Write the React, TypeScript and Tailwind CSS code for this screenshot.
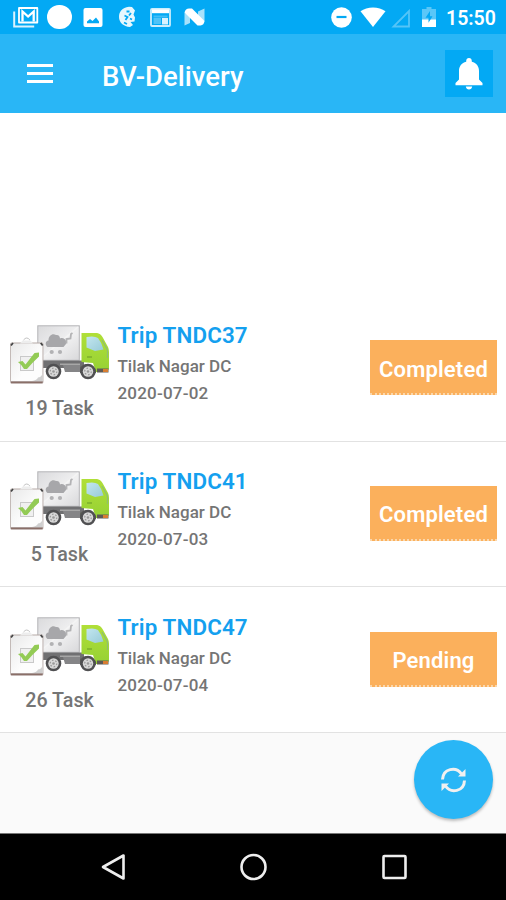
type Trip = {
    name: string;
    depot: string;
    date: string;
    tasks: number;
    status: string;
};

const trips: Trip[] = [
    { name: 'Trip TNDC37', depot: 'Tilak Nagar DC', date: '2020-07-02', tasks: 19, status: 'Completed' },
    { name: 'Trip TNDC41', depot: 'Tilak Nagar DC', date: '2020-07-03', tasks: 5, status: 'Completed' },
    { name: 'Trip TNDC47', depot: 'Tilak Nagar DC', date: '2020-07-04', tasks: 26, status: 'Pending' },
];

function StatusBar() {
    return (
        <div className="flex h-[34px] items-center bg-[#03a9f4] pl-[13px] pr-[10px] text-white">
            {/* mail */}
            <svg className="h-[22px] w-[26px]" viewBox="0 0 26 22" fill="none" stroke="currentColor">
                <path d="M1.2 5.5v14.9h20" strokeWidth="2" strokeOpacity=".85" />
                <path d="M6 2h18.300v14.500H6z" strokeWidth="1.800" strokeLinejoin="round" />
                <path d="M9.500 15.500V5.500l5.600 5 5.600-5v10" strokeWidth="2.300" />
            </svg>
            <div className="ml-2 h-6 w-[25px] rounded-full bg-white" />
            {/* gallery */}
            <svg className="ml-[11px] h-[19px] w-5" viewBox="0 0 20 19">
                <rect x=".5" width="19" height="19" rx="2" fill="currentColor" />
                <path d="M4 15.200v-1.700l3-2.500 2.500 2 3.500-3.500 3 4v1.700z" fill="#03a9f4" />
            </svg>
            {/* profile */}
            <svg className="ml-[15px] h-[22px] w-[18px]" viewBox="0 0 18 22">
                <path d="M11 .8C4 1.500 1 6 1 11c0 5.500 4.500 9.500 11 10l3-2-2.500-3 4-.500.500-4-1.500-3 1.500-4-3-3.500z" fill="currentColor" fillOpacity=".9" />
                <path d="M8.500 5.500h3M13 7l-2 2.500M6.500 9.500l3 1.500-2 3M12 12.500l2 1M6 16.500l3 1.500" fill="none" stroke="#03a9f4" strokeWidth="1.800" />
            </svg>
            {/* news */}
            <svg className="ml-[14px] h-[19px] w-[21px]" viewBox="0 0 21 19">
                <rect x="1" y="1" width="19" height="17" rx="1" fill="none" stroke="currentColor" strokeWidth="1.8" strokeOpacity=".8" />
                <path d="M2 1.500h17v3.700H2z" fill="currentColor" />
                <path d="M3.500 7.500h14v2h-14z" fill="currentColor" fillOpacity=".25" />
                <path d="M3.500 10h7.500v6H3.500z" fill="currentColor" fillOpacity=".3" />
                <path d="M12 10h6v6.500h-6z" fill="currentColor" fillOpacity=".85" />
            </svg>
            {/* N */}
            <svg className="ml-[13px] h-[18px] w-[21px]" viewBox="0 0 21 18">
                <path d="M.500 4.500 6 8v7l-5.500 2.500zM20.500.500v13L14 9V3.500z" fill="currentColor" fillOpacity=".65" />
                <path d="M.500 4.500Q1.500.500 5 .500h3L20.500 13q-.500 4-4 4.500h-3z" fill="currentColor" />
            </svg>
            {/* do not disturb */}
            <svg className="ml-auto h-[21px] w-[21px]" viewBox="0 0 21 21">
                <circle cx="10.5" cy="10.5" r="10.3" fill="currentColor" />
                <path d="M5.5 10h10" stroke="#03a9f4" strokeWidth="2.2" />
            </svg>
            {/* wifi */}
            <svg className="ml-2 h-5 w-[26px]" viewBox="0 0 26 20">
                <path d="M13 20 .5 4.3C7-.8 19-.8 25.500 4.300z" fill="currentColor" />
            </svg>
            {/* signal */}
            <svg className="ml-[5px] mt-0.5 h-[19px] w-5" viewBox="0 0 20 19">
                <path d="M2.500 17.500H18V2z" fill="none" stroke="currentColor" strokeWidth="1.800" strokeOpacity=".32" />
            </svg>
            {/* battery */}
            <svg className="ml-[11px] h-5 w-[14px]" viewBox="0 0 14 20">
                <path d="M4.500 0h5v2H14v11H0V2h4.500z" fill="currentColor" fillOpacity=".35" />
                <path d="M0 12.500h14V20H0z" fill="currentColor" />
                <path d="M8 4 3.500 10.800h3v5l4-6.500H8z" fill="#03a9f4" />
            </svg>
            <span className="ml-[10px] mt-[3px] w-[50px] whitespace-nowrap text-[19.500px] font-semibold leading-none">
                15:50
            </span>
        </div>
    );
}

function AppBar() {
    return (
        <div className="flex h-[78.500px] items-center bg-[#29b6f6] pl-[27px] pr-[13px] text-white">
            <div className="flex w-[26px] flex-col gap-[5px]">
                <div className="h-[3px] bg-white" />
                <div className="h-[3px] bg-white" />
                <div className="h-[3px] bg-white" />
            </div>
            <h1 className="ml-[49px] mt-[7px] text-[27.500px] font-medium leading-none">BV-Delivery</h1>
            <button type="button" className="ml-auto flex h-[47px] w-12 items-center justify-center bg-[#03a9f4]">
                <svg className="mr-px mt-0.5 h-8 w-7" viewBox="0 0 28 32" fill="currentColor">
                    <path d="M14 0c-1.700 0-2.800 1.200-2.800 3v.800C6.500 5 4 8.500 4 13v8.500L.500 25v2.300h27V25L24 21.500V13c0-4.500-2.500-8-7.200-9.200V3c0-1.800-1.100-3-2.800-3zM10.800 28.500c.300 1.800 1.500 3 3.200 3s2.900-1.200 3.200-3z" />
                </svg>
            </button>
        </div>
    );
}

function Wheel({ cx }: { cx: number }) {
    return (
        <g>
            <circle cx={cx} cy="46.500" r="7.800" fill="#505052" />
            <circle cx={cx} cy="46.500" r="5.200" fill="#d8d8d8" />
            <circle cx={cx} cy="46.500" r="3.300" fill="none" stroke="#999" strokeWidth="1.200" strokeDasharray="1.600 1.800" />
            <circle cx={cx} cy="46.500" r="1.300" fill="#999" />
        </g>
    );
}

function TruckPicture() {
    return (
        <svg className="h-[60px] w-[100px]" viewBox="0 0 100 60">
            <defs>
                <linearGradient id="box" x1="0" y1="0" x2="1" y2="1">
                    <stop offset="0" stopColor="#dadadc" />
                    <stop offset=".55" stopColor="#f0f0f1" />
                    <stop offset="1" stopColor="#d8d8da" />
                </linearGradient>
                <linearGradient id="cab" x1="0" y1="0" x2="0" y2="1">
                    <stop offset="0" stopColor="#b0df38" />
                    <stop offset="1" stopColor="#96d134" />
                </linearGradient>
                <linearGradient id="glass" x1="0" y1="0" x2="1" y2="1">
                    <stop offset="0" stopColor="#c3e6ef" />
                    <stop offset="1" stopColor="#98cbd8" />
                </linearGradient>
                <linearGradient id="paper" x1="0" y1="0" x2="1" y2="1">
                    <stop offset="0" stopColor="#e9e9e9" />
                    <stop offset=".6" stopColor="#fdfdfd" />
                </linearGradient>
            </defs>
            {/* cargo box with the cart mark */}
            <rect x="27.800" y=".800" width="41.500" height="34.500" fill="url(#box)" stroke="#b4b4b7" />
            <path d="M28 36 68 2" stroke="#f7f7f7" strokeWidth="1.500" strokeOpacity=".7" />
            <path d="M37.500 22c-2.500-2-2.500-6 1-6.500 0-5 4-7.500 7.500-5.500 2.500-.500 4 1.500 4 3.500 2.500-1 5 0 5.500 2l1.500-.500-1 4-2.500 3z" fill="#a7a7aa" />
            <path d="M56.500 18.500v-4.500l4-.500.500-4.500 1.500-1" fill="none" stroke="#b3b3b5" strokeWidth="1.800" />
            <circle cx="41.700" cy="27" r="2.100" fill="#b2b2b4" />
            <circle cx="50" cy="27" r="2.100" fill="#b2b2b4" />
            {/* chassis */}
            <path d="M29 35.500h45V43H29z" fill="#707072" />
            <path d="M53 40h17v7H55z" fill="#858587" />
            <path d="M50 38.500h20v1.500H50z" fill="#a7a7a7" />
            {/* cab */}
            <path d="M71.500 8h15.500q3.500.500 5.500 4l5.500 10q1 2 1 5v17l-3 3H86l-3-9-11.500-1z" fill="url(#cab)" />
            <path d="M76.500 12q8-1.500 11.500 1 4 5 5.500 11.500l-8.500 1.500-8.500-3.500z" fill="url(#glass)" />
            <path d="M92 15l5.500 10v8" fill="none" stroke="#8fbe72" strokeWidth="1.200" />
            <path d="M77 32h5" stroke="#72a52b" strokeWidth="1.200" />
            <path d="M87 43.500h11.500v4H87z" fill="#5d5a55" />
            <path d="M93 44h5v3h-5z" fill="#d87d31" />
            <path d="M70 42q8-7 16 3v3H70z" fill="#5d5f58" />
            <Wheel cx={43.500} />
            <Wheel cx={78} />
            {/* clipboard */}
            <rect x=".200" y="17.500" width="33.200" height="41" rx="1.500" fill="#b5a9a6" />
            <path d="M1 18.500h31.500V56H1z" fill="url(#paper)" />
            <path d="M1 57.500h31.500" stroke="#8a6f68" strokeWidth="1.500" />
            <path d="M1 20.500 3 18M32.700 20.500l-2-2.500" fill="none" stroke="#444" strokeWidth="1.800" />
            <path d="M10 18.500h13l-2.500-3h-8z" fill="#ededed" />
            <path d="M13.500 15q3.200-4 6.400 0" fill="none" stroke="#c2c2c2" strokeWidth="1" />
            <path d="M22 56q5-1 6-3.500 3-.500 4.500-3V56z" fill="#cfcfcf" />
            <rect x="10.500" y="31.500" width="13" height="14" fill="#f0f0f0" stroke="#c9c9c9" strokeWidth="1" />
            <path d="m8 37 4.500-1 3 3.500L24.500 28l4.500-.500v4Q22 38 17 44h-3q-2-4-6-7z" fill="#93cb55" />
        </svg>
    );
}

function TripRow({ trip }: { trip: Trip }) {
    return (
        <li className="flex h-[145.700px] border-b border-[#e2e2e2] bg-white pl-[9.500px] pr-[9px] font-medium text-[#757575]">
            <div className="flex w-[100px] flex-col items-center pt-[29.300px]">
                <TruckPicture />
                <span className="mt-[14px] whitespace-nowrap text-[19.700px] leading-[20px]">{trip.tasks} Task</span>
            </div>
            <div className="ml-2 flex flex-col whitespace-nowrap pt-[26.300px]">
                <span className="text-[22.400px] font-semibold leading-[27px] tracking-[0.120px] text-[#14a0ef]">{trip.name}</span>
                <span className="mt-1.5 text-[17px] leading-[22px]">{trip.depot}</span>
                <span className="mt-[5px] text-[17px] leading-[22px] tracking-[0.200px]">{trip.date}</span>
            </div>
            <div className="ml-auto mt-[44.300px] flex h-[55px] w-[127px] items-center justify-center border-b-2 border-dotted border-[#fbd7ab] bg-[#fbb05c] pt-[5px] text-[22px] font-semibold tracking-[0.150px] text-white">
                {trip.status}
            </div>
        </li>
    );
}

function RefreshButton() {
    return (
        <button
            type="button"
            className="flex h-[79px] w-[79px] items-center justify-center rounded-full bg-[#29b6f6] shadow-[0_2px_3px_rgba(0,0,0,0.25)]"
        >
            <svg className="h-[26px] w-[27px]" viewBox="0 0 27 26" fill="none" stroke="#f0f0f0" strokeWidth="3">
                <path d="M2.500 12.500C3 1.500 16-1 21.500 7" />
                <path d="M24.500 13.500C24 24.500 11 27 5.500 19" />
                <path d="M25.500 2v7.500H18zM1.500 24v-7.500H9z" fill="#f0f0f0" stroke="none" />
            </svg>
        </button>
    );
}

function NavigationBar() {
    return (
        <div className="flex h-[67px] items-center justify-between border-t border-[#777] bg-black pb-px pl-[100px] pr-[98px]">
            <svg className="h-[28px] w-[28px]" viewBox="0 0 28 28" fill="none" stroke="#eee" strokeWidth="2.600" strokeLinejoin="round">
                <path d="M23.500 2.500v23L3 14z" />
            </svg>
            <svg className="h-[28px] w-[28px]" viewBox="0 0 28 28" fill="none" stroke="#eee" strokeWidth="2.600">
                <circle cx="13.500" cy="14" r="12" />
            </svg>
            <svg className="h-[28px] w-[28px]" viewBox="0 0 28 28" fill="none" stroke="#eee" strokeWidth="2.600">
                <rect x="3.500" y="3" width="22" height="22" rx="1" />
            </svg>
        </div>
    );
}

function App() {
    return (
        <div className="flex h-[900px] w-[506px] flex-col overflow-hidden bg-white font-[Roboto,sans-serif]">
            <StatusBar />
            <AppBar />
            <ul className="mt-auto">
                {trips.map((trip) => (
                    <TripRow key={trip.name} trip={trip} />
                ))}
            </ul>
            <div className="flex h-[100px] justify-end bg-[#fafafa] pr-[13px] pt-[7px]">
                <RefreshButton />
            </div>
            <NavigationBar />
        </div>
    );
}

export default App;
